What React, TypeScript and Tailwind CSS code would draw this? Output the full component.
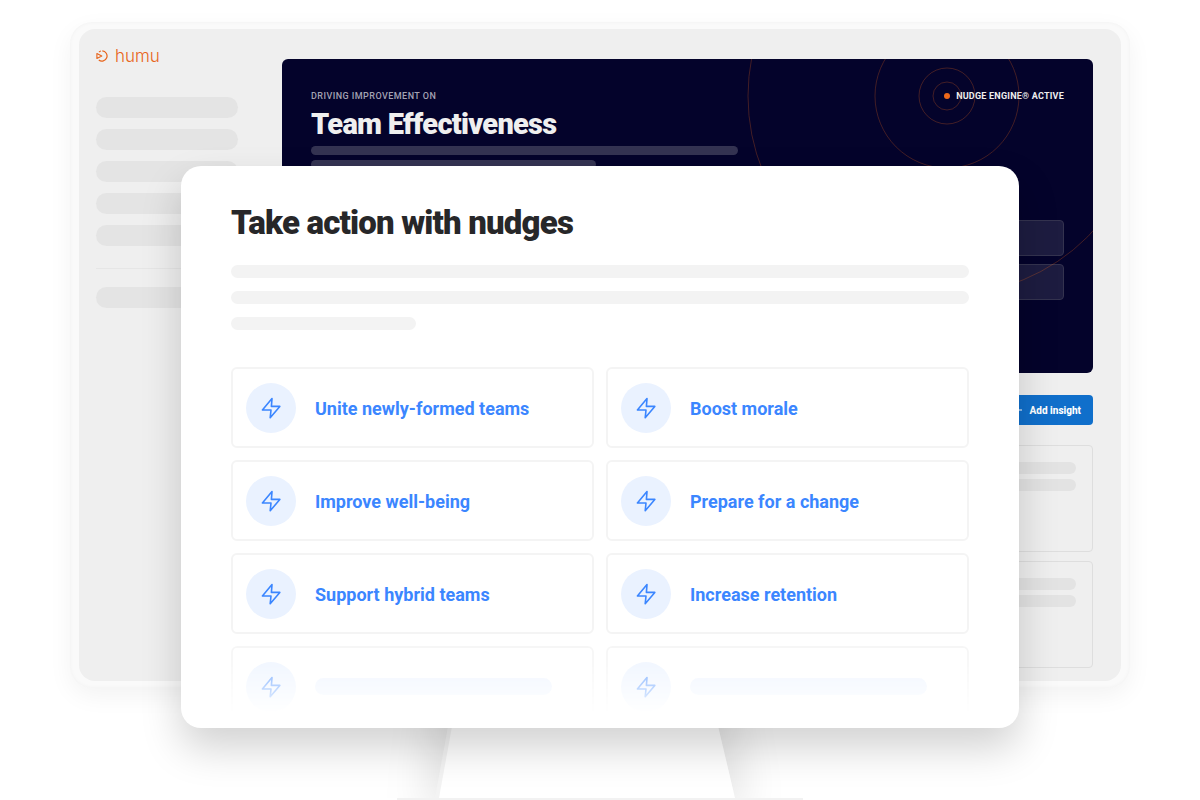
const sidebarItems = ["one", "two", "three", "four", "five"];

const nudges = [
  "Unite newly-formed teams",
  "Boost morale",
  "Improve well-being",
  "Prepare for a change",
  "Support hybrid teams",
  "Increase retention",
];

const ZapIcon = () => (
  <svg
    className="h-6 w-6"
    viewBox="0 0 24 24"
    fill="none"
    stroke="currentColor"
    strokeWidth="1.6"
    strokeLinecap="round"
    strokeLinejoin="round"
    aria-hidden="true"
  >
    <path d="M13 2.6 3.4 14H12l-.8 7.8L20.8 10.4h-8.4Z" />
  </svg>
);

const Logo = () => (
  <div className="flex h-5 items-center gap-[7px] text-[#e8641b]">
    <svg className="h-3 w-3" viewBox="0 0 12 12" fill="none" stroke="currentColor" aria-hidden="true">
      <path d="M3 1.9A5 5 0 0 1 5 1M6.3.9A5.1 5.1 0 1 1 2.8 10" strokeWidth="1.2" />
      <path d="M.9 3.6v4.8L5.8 6Z" strokeWidth="1.1" strokeLinejoin="round" />
    </svg>
    <span className="font-['Inter',sans-serif] text-[17px] leading-5 font-light">humu</span>
  </div>
);

const Sidebar = () => (
  <aside className="w-[142px] shrink-0 pt-[17px]">
    <Logo />
    <div className="mt-[31px] flex flex-col gap-[11px]">
      {sidebarItems.map((item) => (
        <div key={item} className="h-[21px] rounded-full bg-[#e4e4e4]" />
      ))}
    </div>
    <div className="mt-[22px] h-px bg-[#e6e6e6]" />
    <div className="mt-[18px] h-[21px] rounded-full bg-[#e4e4e4]" />
  </aside>
);

const Hero = () => (
  <section className="relative overflow-hidden rounded-md bg-[#04032b] px-[29px] pt-[30px] pb-[73px]">
    <div className="flex items-center justify-between text-[9px] leading-[14px]">
      <span className="font-medium tracking-wider text-[#a3a2b3]">DRIVING IMPROVEMENT ON</span>
      <span className="flex items-center gap-[6px] font-bold tracking-wide text-[#efefef]">
        <span className="h-[6px] w-[6px] rounded-full bg-[#ee681a]" />
        NUDGE ENGINE® ACTIVE
      </span>
    </div>
    <h1 className="mt-[3px] text-[29px] leading-9 font-black tracking-tight text-[#efefef]">
      Team Effectiveness
    </h1>
    <div className="mt-1 h-[9px] w-[427px] rounded-full bg-[#343352]" />
    <div className="mt-[5px] h-[9px] w-[285px] rounded-full bg-[#343352]" />
    <div className="mt-[51px] ml-auto flex w-1/2 flex-col gap-2">
      <div className="h-9 rounded-sm border border-[#34334f] bg-[#1d1c40]" />
      <div className="h-9 rounded-sm border border-[#34334f] bg-[#1d1c40]" />
    </div>

    {/* Signal rings */}
    <svg
      className="pointer-events-none absolute -top-[163px] -right-[54px] h-[400px] w-[400px]"
      viewBox="0 0 400 400"
      fill="none"
      stroke="#ee681a"
      strokeOpacity="0.27"
      aria-hidden="true"
    >
      <circle cx="200" cy="200" r="14" />
      <circle cx="200" cy="200" r="28" />
      <circle cx="200" cy="200" r="72" />
      <circle cx="200" cy="200" r="199" />
    </svg>
  </section>
);

const InsightCard = () => (
  <div className="flex h-[107px] flex-col gap-[5px] rounded-sm border border-[#dedede] px-4 pt-4">
    <div className="h-3 rounded-full bg-[#e3e3e3]" />
    <div className="h-3 rounded-full bg-[#e3e3e3]" />
  </div>
);

const Monitor = () => (
  <div className="mx-auto w-full max-w-[1060px]">
    <div className="rounded-[22px] bg-[#fafafa] px-[9px] pt-[7px] pb-[7px] shadow-[0_8px_24px_rgba(0,0,0,0.05),inset_0_0_4px_rgba(0,0,0,0.04)]">
      <div className="flex gap-11 rounded-2xl bg-[#efefef] pr-7 pb-[13px] pl-[17px]">
        <Sidebar />
        <main className="min-w-0 flex-1 pt-[30px]">
          <Hero />
          <div className="mt-[22px] flex justify-end">
            <button className="flex h-[30px] items-center gap-2 rounded-sm bg-[#106fcb] px-3 text-[10px] font-extrabold text-white">
              <svg className="h-2 w-2" viewBox="0 0 8 8" stroke="currentColor" aria-hidden="true">
                <path d="M4 0v8M0 4h8" />
              </svg>
              Add insight
            </button>
          </div>
          <div className="mt-5 flex flex-col gap-[9px]">
            <InsightCard />
            <InsightCard />
          </div>
        </main>
      </div>
    </div>

    {/* Stand */}
    <svg className="mx-auto block h-28 w-[406px] overflow-visible" viewBox="0 0 406 112" aria-hidden="true">
      <defs>
        <filter id="stand-blur" x="-40%" y="-40%" width="180%" height="180%">
          <feGaussianBlur stdDeviation="20" />
        </filter>
        <clipPath id="stand-clip">
          <rect x="-100" y="0" width="606" height="110" />
        </clipPath>
      </defs>
      <g clipPath="url(#stand-clip)">
        <path d="M40 0H330L350 120H26Z" fill="#000" fillOpacity="0.1" filter="url(#stand-blur)" />
      </g>
      <path d="M58 0H312L338 110H38Z" fill="#f3f3f3" />
      <path d="M62 0H312L338 110H42Z" fill="#fff" />
      <rect y="110" width="406" height="2" fill="#f2f2f2" />
    </svg>
  </div>
);

const NudgeIcon = () => (
  <span className="flex h-[50px] w-[50px] shrink-0 items-center justify-center rounded-full bg-[#eaf2ff] text-[#3b86ff]">
    <ZapIcon />
  </span>
);

const cardClass =
  "flex h-[81px] items-center gap-[19px] rounded-md border-2 border-[#f4f4f4] px-[13px]";

const NudgeDialog = () => (
  <section
    aria-labelledby="nudges-title"
    className="mx-auto w-full max-w-[838px] rounded-[20px] bg-white px-[50px] pt-[37px] pb-px shadow-[0_20px_40px_rgba(0,0,0,0.18)]"
  >
    <h2 id="nudges-title" className="text-[33px] leading-10 font-black tracking-tight text-[#272729]">
      Take action with nudges
    </h2>
    <div className="mt-[22px] flex flex-col gap-[13px]">
      <div className="h-[13px] rounded-full bg-[#f3f3f3]" />
      <div className="h-[13px] rounded-full bg-[#f3f3f3]" />
      <div className="h-[13px] w-1/4 rounded-full bg-[#f3f3f3]" />
    </div>
    <div className="mt-[37px] grid grid-cols-2 gap-3">
      {nudges.map((nudge) => (
        <button key={nudge} className={cardClass}>
          <NudgeIcon />
          <span className="pt-[2px] text-lg font-bold text-[#3b86ff]">{nudge}</span>
        </button>
      ))}
      {["left", "right"].map((side) => (
        <div
          key={side}
          className={`${cardClass} [mask-image:linear-gradient(to_bottom,rgba(0,0,0,0.85),transparent_85%)]`}
        >
          <NudgeIcon />
          <div className="mr-[27px] h-[17px] flex-1 rounded-full bg-[#eaf2ff]" />
        </div>
      ))}
    </div>
  </section>
);

const App = () => {
  return (
    <div className="grid min-h-screen grid-cols-1 items-start overflow-hidden bg-white font-['Roboto',sans-serif]">
      <div className="col-start-1 row-start-1 pt-[22px]">
        <Monitor />
      </div>
      <div className="z-10 col-start-1 row-start-1 pt-[166px]">
        <NudgeDialog />
      </div>
    </div>
  );
};

export default App;
